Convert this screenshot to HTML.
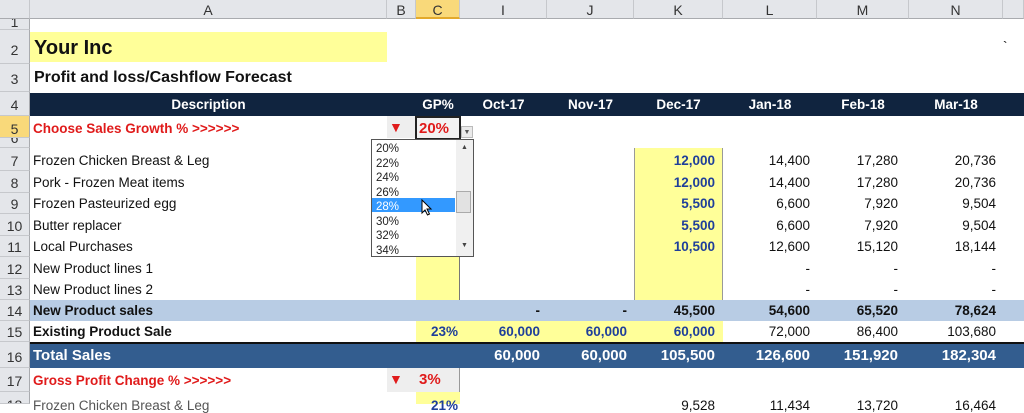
<!DOCTYPE html><html><head><meta charset="utf-8"><style>
body{margin:0;width:1024px;height:404px;overflow:hidden;background:#fff;position:relative;font-family:"Liberation Sans",sans-serif}
div{position:absolute;box-sizing:border-box}
.t{white-space:nowrap;font-size:13.5px;color:#111;line-height:1}
.r{text-align:right}
.b{font-weight:bold}
.bl{color:#1f3f9a;font-weight:bold}
.ch{top:0;height:19px;background:#e4e6ea;border-right:1px solid #c6c8cc;border-bottom:1px solid #a9abaf;text-align:center;font-size:14px;color:#333;line-height:20px}
.rh{left:0;width:30px;background:#e4e6ea;border-bottom:1px solid #c6c8cc;border-right:1px solid #a9abaf;text-align:center;font-size:14px;color:#333;overflow:hidden}
.col{line-height:21.5px;top:150px}
</style></head><body>
<div class="ch" style="left:0;width:30px"></div>
<div class="ch" style="left:30px;width:357px">A</div>
<div class="ch" style="left:387px;width:29px">B</div>
<div class="ch" style="left:416px;width:44px;background:#f9d97a;border-bottom:2px solid #e3a92b">C</div>
<div class="ch" style="left:460px;width:87px">I</div>
<div class="ch" style="left:547px;width:87px">J</div>
<div class="ch" style="left:634px;width:89px">K</div>
<div class="ch" style="left:723px;width:94px">L</div>
<div class="ch" style="left:817px;width:92px">M</div>
<div class="ch" style="left:909px;width:94px">N</div>
<div class="ch" style="left:1003px;width:21px"></div>
<div class="rh" style="top:19px;height:11px;line-height:6px">1</div>
<div class="rh" style="top:30px;height:34px;line-height:40px">2</div>
<div class="rh" style="top:64px;height:28px;line-height:30px">3</div>
<div class="rh" style="top:92px;height:24px;line-height:26px">4</div>
<div class="rh" style="top:116px;height:22px;line-height:26px;background:#f9d97a">5</div>
<div class="rh" style="top:138px;height:10px;line-height:0px">6</div>
<div class="rh" style="top:148px;height:23px;line-height:26px">7</div>
<div class="rh" style="top:171px;height:22px;line-height:24px">8</div>
<div class="rh" style="top:193px;height:21px;line-height:23px">9</div>
<div class="rh" style="top:214px;height:22px;line-height:24px">10</div>
<div class="rh" style="top:236px;height:21px;line-height:23px">11</div>
<div class="rh" style="top:257px;height:22px;line-height:24px">12</div>
<div class="rh" style="top:279px;height:21px;line-height:23px">13</div>
<div class="rh" style="top:300px;height:21px;line-height:23px">14</div>
<div class="rh" style="top:321px;height:21px;line-height:23px">15</div>
<div class="rh" style="top:342px;height:26px;line-height:30px">16</div>
<div class="rh" style="top:368px;height:24px;line-height:27px">17</div>
<div class="rh" style="top:392px;height:12px;line-height:26px">18</div>
<div style="left:30px;top:32px;width:357px;height:30px;background:#ffff99"></div>
<div style="left:416px;top:138px;width:44px;height:162px;background:#ffff99;border-right:1px solid #777"></div>
<div style="left:634px;top:148px;width:89px;height:152px;background:#ffff99;border-left:1px solid #999;border-right:1px solid #999"></div>
<div style="left:416px;top:392px;width:44px;height:12px;background:#ffff99"></div>
<div class="t b" style="left:34px;top:38px;font-size:20px">Your Inc</div>
<div class="t b" style="left:34px;top:70px;font-size:16px">Profit and loss/Cashflow Forecast</div>
<div style="left:30px;top:93px;width:994px;height:23px;background:#10243f"></div>
<div class="t b" style="left:30px;top:98px;width:357px;text-align:center;color:#fff">Description</div>
<div class="t b" style="left:416px;top:98px;width:44px;text-align:center;color:#fff">GP%</div>
<div class="t b" style="left:460px;top:98px;width:87px;text-align:center;color:#fff">Oct-17</div>
<div class="t b" style="left:547px;top:98px;width:87px;text-align:center;color:#fff">Nov-17</div>
<div class="t b" style="left:634px;top:98px;width:89px;text-align:center;color:#fff">Dec-17</div>
<div class="t b" style="left:723px;top:98px;width:94px;text-align:center;color:#fff">Jan-18</div>
<div class="t b" style="left:817px;top:98px;width:92px;text-align:center;color:#fff">Feb-18</div>
<div class="t b" style="left:909px;top:98px;width:94px;text-align:center;color:#fff">Mar-18</div>
<div class="t b" style="left:33px;top:122px;color:#e01b1b">Choose Sales Growth % &gt;&gt;&gt;&gt;&gt;&gt;</div>
<div style="left:387px;top:116px;width:29px;height:22px;background:#eee"></div>
<div class="t" style="left:389px;top:120px;color:#e01b1b;font-size:14px">▼</div>
<div style="left:415px;top:116px;width:46px;height:24px;border:2px solid #222;background:#f2f2f2"></div>
<div class="t b" style="left:419px;top:121px;color:#e01b1b;font-size:15px">20%</div>
<div style="left:461px;top:126px;width:12px;height:12px;background:#eaeaea;border:1px solid #bbb;font-size:7px;color:#555;text-align:center;line-height:12px">▼</div>
<div style="left:371px;top:139px;width:103px;height:118px;background:#fff;border:1px solid #555"></div>
<div style="left:456px;top:140px;width:17px;height:116px;background:#f0f0f0"></div>
<div style="left:456px;top:191px;width:15px;height:22px;background:#e2e2e2;border:1px solid #aaa"></div>
<div class="t" style="left:461px;top:144px;font-size:7px;color:#444">▲</div>
<div class="t" style="left:461px;top:242px;font-size:7px;color:#444">▼</div>
<div style="left:372px;top:198px;width:83px;height:14px;background:#3399ff"></div>
<div class="t" style="left:376px;top:142px;font-size:11.5px;line-height:14.5px;color:#222">20%<br>22%<br>24%<br>26%<br><span style="color:#fff">28%</span><br>30%<br>32%<br>34%</div>
<svg style="position:absolute;left:421px;top:199px" width="12" height="18" viewBox="0 0 12 18"><path d="M1 1 L1 14 L4 11 L6.5 16 L8.5 15 L6 10 L10 10 Z" fill="#fff" stroke="#000" stroke-width="1"/></svg>
<div class="t" style="left:33px;top:154px">Frozen Chicken Breast &amp; Leg</div>
<div class="t" style="left:33px;top:176px">Pork - Frozen Meat items</div>
<div class="t" style="left:33px;top:197px">Frozen Pasteurized egg</div>
<div class="t" style="left:33px;top:219px">Butter replacer</div>
<div class="t" style="left:33px;top:240px">Local Purchases</div>
<div class="t" style="left:33px;top:262px">New Product lines 1</div>
<div class="t" style="left:33px;top:283px">New Product lines 2</div>
<div class="t bl r col" style="left:634px;width:81px">12,000<br>12,000<br>5,500<br>5,500<br>10,500</div>
<div class="t r col" style="left:723px;width:87px">14,400<br>14,400<br>6,600<br>6,600<br>12,600<br>-<br>-</div>
<div class="t r col" style="left:817px;width:81px">17,280<br>17,280<br>7,920<br>7,920<br>15,120<br>-<br>-</div>
<div class="t r col" style="left:909px;width:87px">20,736<br>20,736<br>9,504<br>9,504<br>18,144<br>-<br>-</div>
<div class="t" style="left:1003px;top:40px">`</div>
<div style="left:30px;top:300px;width:994px;height:21px;background:#b8cce4"></div>
<div class="t b" style="left:33px;top:304px">New Product sales</div>
<div class="t b r" style="left:460px;width:80px;top:304px">-</div>
<div class="t b r" style="left:547px;width:80px;top:304px">-</div>
<div class="t b r" style="left:634px;width:81px;top:304px">45,500</div>
<div class="t b r" style="left:723px;width:87px;top:304px">54,600</div>
<div class="t b r" style="left:817px;width:81px;top:304px">65,520</div>
<div class="t b r" style="left:909px;width:87px;top:304px">78,624</div>
<div style="left:416px;top:321px;width:307px;height:21px;background:#ffff99"></div>
<div class="t b" style="left:33px;top:325px">Existing Product Sale</div>
<div class="t bl r" style="left:416px;width:42px;top:325px">23%</div>
<div class="t bl r" style="left:460px;width:80px;top:325px">60,000</div>
<div class="t bl r" style="left:547px;width:80px;top:325px">60,000</div>
<div class="t bl r" style="left:634px;width:81px;top:325px">60,000</div>
<div class="t r" style="left:723px;width:87px;top:325px">72,000</div>
<div class="t r" style="left:817px;width:81px;top:325px">86,400</div>
<div class="t r" style="left:909px;width:87px;top:325px">103,680</div>
<div style="left:30px;top:342px;width:994px;height:26px;background:#335d8f;border-top:2px solid #111"></div>
<div class="t b" style="left:33px;top:348px;color:#fff;font-size:15px">Total Sales</div>
<div class="t b r" style="left:460px;width:80px;top:348px;color:#fff;font-size:15px">60,000</div>
<div class="t b r" style="left:547px;width:80px;top:348px;color:#fff;font-size:15px">60,000</div>
<div class="t b r" style="left:634px;width:81px;top:348px;color:#fff;font-size:15px">105,500</div>
<div class="t b r" style="left:723px;width:87px;top:348px;color:#fff;font-size:15px">126,600</div>
<div class="t b r" style="left:817px;width:81px;top:348px;color:#fff;font-size:15px">151,920</div>
<div class="t b r" style="left:909px;width:87px;top:348px;color:#fff;font-size:15px">182,304</div>
<div class="t b" style="left:33px;top:374px;color:#e01b1b">Gross Profit Change % &gt;&gt;&gt;&gt;&gt;&gt;</div>
<div style="left:387px;top:368px;width:73px;height:24px;background:#eee;border-right:1px solid #999"></div>
<div class="t" style="left:389px;top:372px;color:#e01b1b;font-size:14px">▼</div>
<div class="t b" style="left:419px;top:372px;color:#e01b1b;font-size:15px">3%</div>
<div class="t" style="left:33px;top:399px;color:#555">Frozen Chicken Breast &amp; Leg</div>
<div class="t bl r" style="left:416px;width:42px;top:399px">21%</div>
<div class="t r" style="left:634px;width:81px;top:399px">9,528</div>
<div class="t r" style="left:723px;width:87px;top:399px">11,434</div>
<div class="t r" style="left:817px;width:81px;top:399px">13,720</div>
<div class="t r" style="left:909px;width:87px;top:399px">16,464</div>
</body></html>
